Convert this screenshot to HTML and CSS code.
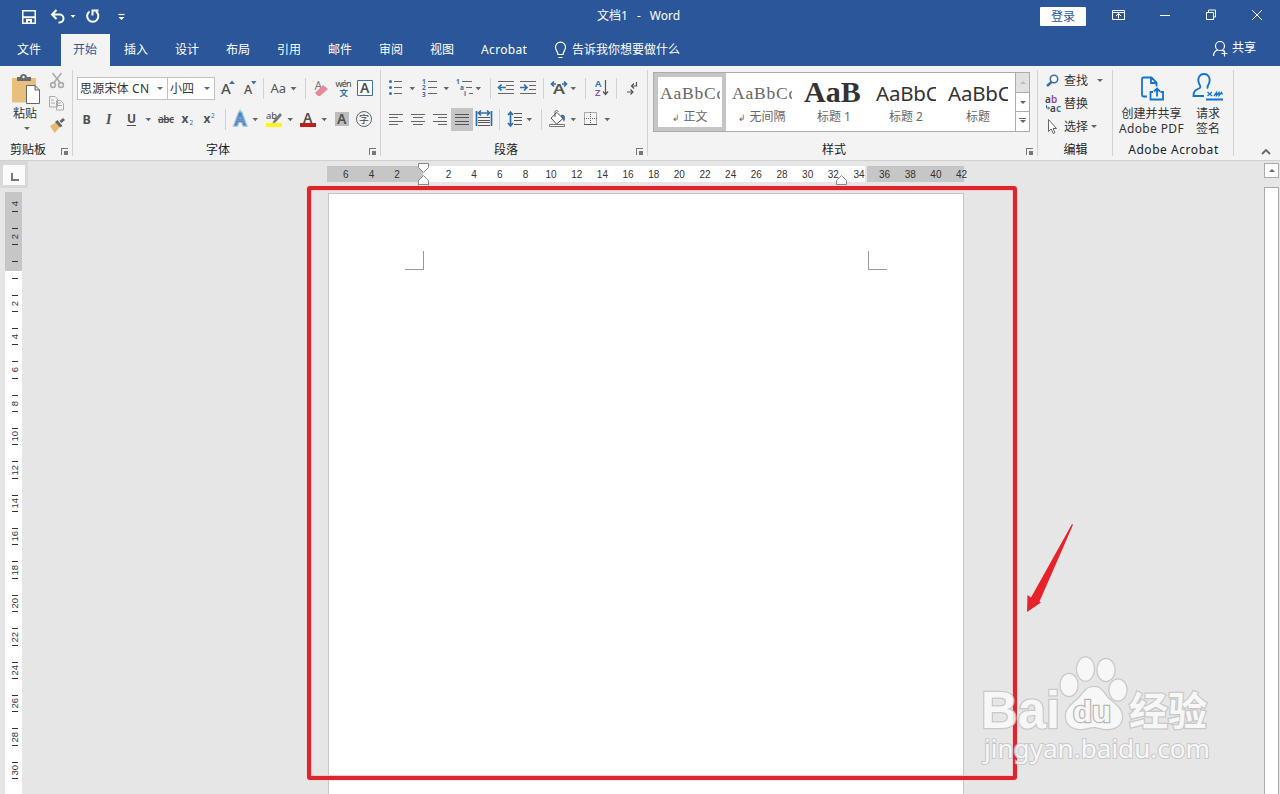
FILE: index.html
```html
<!DOCTYPE html>
<html lang="zh-CN">
<head>
<meta charset="utf-8">
<title>文档1 - Word</title>
<link rel="stylesheet" href="styles.css">
</head>
<body>
<div class="app">
<header class="head">
  <div class="titlebar">
    <svg class="quick" width="130" height="32" viewBox="0 0 130 32" fill="none" stroke="#fff">
      <path d="M22.750 10.750h12.500v12.500h-12.500z" stroke-width="1.500"/><path d="M23 17.200h12M27 23v-3h4v3" stroke-width="2"/>
      <path d="M56.500 10L52 14.500l4.500 4.500M52.500 14.500h7a4 4 0 0 1 0 8h-1" stroke-width="2"/>
      <path d="M70.500 15h5l-2.500 2.800z" fill="#fff" stroke="none"/>
      <path d="M89.500 11.500a5.600 5.600 0 1 0 6.500 0M92.500 15.500v-5h6" stroke-width="2"/>
      <path d="M118.500 14.500h6" stroke-width="1.200"/><path d="M118.500 17h6l-3 3z" fill="#fff" stroke="none"/>
    </svg>
    <div class="doc-title"><span>文档1</span><span>-</span><span>Word</span></div>
    <button class="login">登录</button>
    <svg class="winbtns" width="194" height="32" viewBox="1086 0 194 32" fill="none" stroke="#fff">
      <path d="M1112.500 10.500h12v9h-12zM1112.500 12.500h12M1118.500 18.500v-5M1116 16l2.500-2.500L1121 16"/>
      <path d="M1160 15.500h10M1206.500 12.500h7v7h-7zM1208.500 12v-2h7v7h-2M1252 10l10 10M1262 10l-10 10"/>
    </svg>
  </div>
  <nav class="tabs">
    <a class="tab file">文件</a><a class="tab active">开始</a><a class="tab">插入</a><a class="tab">设计</a><a class="tab">布局</a><a class="tab">引用</a><a class="tab">邮件</a><a class="tab">审阅</a><a class="tab">视图</a><a class="tab latin">Acrobat</a>
    <span class="tell"><svg width="14" height="18" viewBox="553 41 14 18" fill="none" stroke="#fff" stroke-width="1.200"><path d="M558 54.500c0-3-2.500-3.800-2.500-7.300a5 5 0 0 1 10 0c0 3.500-2.500 4.300-2.500 7.300zM558.500 57.500h4"/></svg>告诉我你想要做什么</span>
    <span class="share"><svg width="17" height="17" viewBox="1212 40 17 17" fill="none" stroke="#fff" stroke-width="1.200"><circle cx="1220" cy="46" r="4.500"/><path d="M1213.500 56c0-3.500 2-5.500 4.500-6.200M1222 50l2 1.500M1221.500 53.500h6M1224.500 50.500v6"/></svg>共享</span>
  </nav>
</header>

<section class="ribbon">
  <div class="group clip">
    <div class="tools">
      <div class="paste">
        <svg width="34" height="32" viewBox="10 73 34 32"><path d="M13 78h24v24.500H13z" fill="#e8c07c"/><path d="M18 81v-4h3c0-4 7-4 7 0h4v4z" fill="#6b6b6b"/><circle cx="24.500" cy="77" r="1.200" fill="#f3f3f3"/><path d="M27.500 85.500h8.500l4.500 4.500v13.500h-13zM36 85.500v4.500h4.500" fill="#fff" stroke="#666"/></svg>
        <span>粘贴</span>
        <i class="caret"></i>
      </div>
      <svg width="22" height="66" viewBox="47 70 22 66" fill="none">
        <g stroke="#aaa" stroke-width="1.600"><path d="M52.500 73l7.500 9.500M61.500 73L54 82.500"/><circle cx="53" cy="85" r="2.400"/><circle cx="61" cy="85" r="2.400"/></g>
        <path d="M49.500 96.500h5.500l2.500 2.500v8h-8zM56.500 100.500h4l3 3v6.500h-7zM58 103h3M58 105.500h4M51 100h3M51 103h4" stroke="#aaa"/>
        <path d="M50 126l6-3.500 3.500 5-5 5.500z" fill="#e8b96b"/><path d="M55 122l2.500-2 5 6-2.500 1.500zM59.500 121l3.500-3 2 2-3.500 3z" fill="#666"/>
      </svg>
    </div>
    <div class="label"><span>剪贴板</span><i class="launch"></i></div>
  </div>

  <div class="group font">
    <div class="tools">
      <div class="row">
        <div class="combo family"><span>思源宋体 CN</span><i class="caret"></i></div>
        <div class="combo size"><span>小四</span><i class="caret"></i></div>
        <svg width="160" height="26" viewBox="216 75 160 26">
          <g class="mid"><text x="221" y="94" font-size="15">A</text><text x="244" y="94" font-size="12.500">A</text></g>
          <path d="M229 84l3-3.500 3 3.500zM251 81h5.500l-2.700 3.500z" fill="#4472a8"/>
          <text x="270.500" y="92.500" font-size="13" fill="#555">Aa</text><path class="car" d="M290.500 87h6l-3 3.500z"/>
          <path class="sep" d="M263.500 78v21M305.500 78v21"/>
          <text x="314.500" y="90" font-size="12" fill="#777">A</text><path d="M315 93l8-8 5 4-8 7h-2z" fill="#e58a96"/>
          <text x="335.500" y="86.500" font-size="9" fill="#444" textLength="16">wén</text><text x="339.500" y="96" font-size="8.500" fill="#2f6fa8" font-weight="bold">文</text>
          <path d="M357.500 80.500h15v15h-15z" fill="#fff" stroke="#41719c"/><text class="bold6" x="360" y="93" font-size="14">A</text>
        </svg>
      </div>
      <div class="row">
        <svg width="299" height="26" viewBox="77 106 299 26">
          <g font-size="12.500" font-weight="bold" fill="#505050"><text x="82.500" y="123.500">B</text><text x="106" y="123.500" font-family="Liberation Serif" font-style="italic" font-size="14">I</text><text x="127" y="123" font-size="12">U</text>
          <text x="158" y="123" font-size="10" textLength="16" font-weight="600">abc</text><text x="181.500" y="123" font-size="12">x</text><text x="203.500" y="123" font-size="12">x</text></g>
          <path d="M127 125.500h9M158 119.500h16" stroke="#505050"/>
          <text x="189.500" y="125" font-size="6.500" fill="#2f6fa8">2</text><text x="211" y="118" font-size="6.500" fill="#2f6fa8">2</text>
          <path class="car" d="M145.500 118h5.500l-2.700 3.200zM252.500 118h5.500l-2.700 3.200zM287.500 118h5.500l-2.700 3.200zM321.500 118h5.500l-2.700 3.200z"/>
          <path class="sep" d="M225.500 109v21"/>
          <text x="235" y="125" font-size="16" fill="#fff" stroke="#9cc3e6" stroke-width="3.500">A</text><text x="235" y="125" font-size="16" fill="#fff" stroke="#3f7db8" stroke-width="1">A</text>
          <text x="266" y="118.500" font-size="9.500" fill="#444">ab</text><path d="M280 113l-6 7-2 4 4-2 6-7z" fill="#777"/><path d="M266 123h16v4h-16z" fill="#fcf51a"/>
          <text class="bold6" x="303" y="122.500" font-size="14">A</text><path d="M300 123h16v4h-16z" fill="#c61a1f"/>
          <path d="M335 112h14v14h-14z" fill="#bdbdbd"/><text class="bold6" x="337" y="124" font-size="14">A</text>
          <circle cx="364" cy="119" r="7.500" fill="none" stroke="#666"/><text x="359" y="122.800" font-size="10" fill="#444">字</text>
        </svg>
      </div>
    </div>
    <div class="label"><span>字体</span><i class="launch"></i></div>
  </div>

  <div class="group para">
    <div class="tools">
      <svg width="262" height="62" viewBox="383 72 262 62" fill="none">
        <g stroke="#666"><path d="M394 81.500h8M394 87.500h8M394 93.500h8M428 81.500h9M428 87.500h9M428 93.500h9M462 81.500h10M466 87.500h6M469 93.500h4"/>
        <path d="M498 81.500h16M506 85.500h8M506 89.500h8M498 93.500h16M520 81.500h16M529 85.500h7M529 89.500h7M520 93.500h16"/>
        <path d="M389 114.500h14M389 117.500h9M389 121.500h14M389 124.500h9M411 114.500h14M413 117.500h10M411 121.500h14M413 124.500h10M433 114.500h14M438 117.500h9M433 121.500h14M438 124.500h9"/></g>
        <path d="M451 108h22v23h-22z" fill="#c5c5c5"/><path d="M455 114.500h14M455 117.500h14M455 121.500h14M455 124.500h14M478 117.500h12M478 120.500h12M478 122.500h12M478 125.500h12M514 113.500h8M514 117.500h8M514 120.500h8M514 124.500h8" stroke="#555"/>
        <g fill="#3c6ea8"><circle cx="390.500" cy="81.500" r="1.500"/><circle cx="390.500" cy="87.500" r="1.500"/><circle cx="390.500" cy="93.500" r="1.500"/>
        <g font-size="6.500" font-weight="bold"><text x="422" y="84">1</text><text x="422" y="90">2</text><text x="422" y="96.500">3</text><text x="456" y="84">1</text><text x="460" y="90">a</text><text x="464" y="96">i</text></g></g>
        <g stroke="#2f6fa8" stroke-width="1.700"><path d="M506 87.500h-6M501.500 84.500l-3 3 3 3M520 87.500h6M524 84.500l3 3-3 3M476.500 111v15M491.500 111v15M479 113h10M481 110.500l-2.500 2.500 2.500 2.500M487 110.500l2.500 2.500-2.500 2.500M510.500 113v12M508 115l2.500-3 2.500 3M508 123l2.500 3 2.500-3"/>
        <path d="M556 84h-4M554 81.500l-2.500 2.500 2.500 2.500M562 84h4M564 81.500l2.500 2.500-2.500 2.500"/></g>
        <text x="553" y="94" font-size="14.500" font-weight="600" textLength="12" lengthAdjust="spacingAndGlyphs" fill="#555">A</text>
        <g font-size="9.500" font-weight="600"><text x="595" y="87" fill="#2f6fa8">A</text><text x="595" y="95.500" fill="#8d4b9f">Z</text></g>
        <path d="M605.500 80v14M603 91.500l2.500 3 2.500-3M636.500 82v4h-5M634 83.500l-2.500 2.500 2.500 2.500M627 92h6M630.500 89.500l2.500 2.500-2.500 2.500" stroke="#555" stroke-width="1.200"/>
        <path d="M551 118l6-5.500 6 6-6.500 5.500zM555 117v-5c0-2 3-2 3 0" stroke="#555" fill="#fff"/><path d="M561 115c4-1 5 3 3 7-1-2-1-4-3-5z" fill="#3c6ea8"/><path d="M549.500 124.500h15v2h-15z" fill="#fff" stroke="#777"/>
        <path d="M584.500 112.500h12v12h-12zM590.500 112v13M584 118.500h13" stroke="#666" stroke-dasharray="1 1"/><path d="M584 124.500h13" stroke="#555"/>
        <path class="car" d="M409.500 87h5.500l-2.700 3.200zM443.500 87h5.500l-2.700 3.200zM475.500 87h5.500l-2.700 3.200zM570.500 87h5.500l-2.700 3.200zM526.500 118h5.500l-2.700 3.200zM570.500 118h5.500l-2.700 3.200zM604.500 118h5.500l-2.700 3.200z"/>
        <path class="sep" d="M490.500 78v21M543.500 78v21M585.500 78v21M616.500 78v21M499.500 109v21M541.500 109v21"/>
      </svg>
    </div>
    <div class="label"><span>段落</span><i class="launch"></i></div>
  </div>

  <div class="group styles">
    <div class="tools">
      <div class="gallery">
        <div class="style on"><div class="sample thin">AaBbCc</div><div class="name"><small>↲</small> 正文</div></div>
        <div class="style"><div class="sample thin">AaBbCc</div><div class="name"><small>↲</small> 无间隔</div></div>
        <div class="style"><div class="sample heavy">AaB</div><div class="name">标题 1</div></div>
        <div class="style"><div class="sample sans">AaBbC</div><div class="name">标题 2</div></div>
        <div class="style"><div class="sample sans">AaBbC</div><div class="name">标题</div></div>
        <div class="spin"><span class="off"><i class="caret rise"></i></span><span><i class="caret"></i></span><span class="more"><i class="caret"></i></span></div>
      </div>
    </div>
    <div class="label"><span>样式</span><i class="launch"></i></div>
  </div>

  <div class="group edit">
    <div class="tools">
      <div class="cmd"><svg width="17" height="18" viewBox="0 0 17 18"><circle cx="10" cy="7" r="3.700" fill="#fff" stroke="#3c6ea8" stroke-width="1.600"/><path d="M7.500 10L3 14" stroke="#3c6ea8" stroke-width="2.400"/></svg><span>查找</span><i class="caret far"></i></div>
      <div class="cmd"><svg width="17" height="18" viewBox="0 0 17 18" font-size="10" font-weight="600"><text x="1" y="8" fill="#444">a</text><text x="7" y="8" fill="#8d4b9f">b</text><text x="6" y="16.500" fill="#444">a</text><text x="12" y="16.500" fill="#2f6fa8">c</text><path d="M2.500 10v3h3M4 11.500L5.500 13 4 14.500" fill="none" stroke="#2f6fa8"/></svg><span>替换</span></div>
      <div class="cmd"><svg width="17" height="18" viewBox="0 0 17 18"><path d="M4.500 1.500v12l2.700-2.500 2 4.500 1.800-.8-2-4.200h3.500z" fill="#fff" stroke="#666"/></svg><span>选择</span><i class="caret"></i></div>
    </div>
    <div class="label"><span>编辑</span></div>
  </div>

  <div class="group acro">
    <div class="tools">
      <div class="big wide"><svg width="28" height="30" viewBox="1139 74 28 30" fill="none" stroke="#1473d0" stroke-width="1.800"><path d="M1148 97.500h-3.500a1.500 1.500 0 0 1-1.500-1.500V80a1.500 1.500 0 0 1 1.500-1.500h8l5 5v4M1152 79v5h5M1154 93h-2.500v7.500h12.500V93h-2.500M1158 97.500v-7.500M1155 92.500l3-3 3 3"/></svg><span>创建并共享<br><em class="latin">Adobe PDF</em></span></div>
      <div class="big"><svg width="34" height="30" viewBox="1191 74 34 30" fill="none" stroke="#1473d0" stroke-width="1.800"><path d="M1204 97h-10.500c0-5 2-6 5.500-7.500 2.500-1 1-3 0-5-2-5 .5-9.500 5-9.500s7 4.500 5 9.500c-1 2-2.500 3.500-1 5M1206 100.500h17"/><path d="M1207.500 93l4.500 4M1212 93l-4.500 4M1214 97l2.500-3.500v3l2.500-3v3l2.500-3 1 2" stroke-width="1.300"/></svg><span>请求<br>签名</span></div>
    </div>
    <div class="label"><span class="latin">Adobe Acrobat</span></div>
  </div>
  <svg class="collapse" width="12" height="10" viewBox="0 0 12 10" fill="none" stroke="#666" stroke-width="1.800"><path d="M2 7l4-4 4 4"/></svg>
</section>

<main class="work">
  <aside class="left">
    <div class="tabstop"><i></i></div>
    <div class="vruler">
      <b class="first"><u>4</u></b><b><u>2</u></b><b><u></u></b><b><u>2</u></b><b><u>4</u></b><b><u>6</u></b><b><u>8</u></b><b><u>10</u></b><b><u>12</u></b><b><u>14</u></b><b><u>16</u></b><b><u>18</u></b><b><u>20</u></b><b><u>22</u></b><b><u>24</u></b><b><u>26</u></b><b><u>28</u></b><b><u>30</u></b>
    </div>
  </aside>
  <div class="center">
    <div class="hruler">
      <span>6</span><span>4</span><span>2</span><span></span><span>2</span><span>4</span><span>6</span><span>8</span><span>10</span><span>12</span><span>14</span><span>16</span><span>18</span><span>20</span><span>22</span><span>24</span><span>26</span><span>28</span><span>30</span><span>32</span><span>34</span><span>36</span><span>38</span><span>40</span><span>42</span>
      <svg class="indent" width="12" height="28" viewBox="0 0 12 28" fill="#fff" stroke="#888"><path d="M.5.500h10v4l-5 5-5-5zM5.500 12.500l5 5v4H.5v-4zM.5 21.500h10v5H.5z"/></svg>
      <svg class="indent right" width="12" height="11" viewBox="0 0 12 11" fill="#fff" stroke="#888"><path d="M5.500.500l5 5v4H.5v-4z"/></svg>
    </div>
    <div class="page"><i class="mark"></i><i class="mark r"></i></div>
  </div>
  <div class="scroll"><div class="up"><i class="caret rise"></i></div><div class="thumb"></div></div>
</main>
<div class="frame"></div>
<svg class="notes" width="320" height="294" viewBox="960 500 320 294">
  <path d="M1072 524q1.500 0 .5 2l-33 75.500 1.500 1-14 9.500.500-17 3.500 2.500z" fill="#e8212b"/>
  <g class="wm" fill="#fafafa" stroke="#c4c4c4" stroke-width="2.500" paint-order="stroke" opacity=".85">
    <text x="981" y="728" font-family="Liberation Sans" font-size="51" font-weight="bold" textLength="79" lengthAdjust="spacingAndGlyphs">Bai</text>
    <ellipse cx="1069" cy="685" rx="8.500" ry="11"/><ellipse cx="1085.500" cy="669" rx="8.500" ry="11.500"/><ellipse cx="1106" cy="670" rx="8.500" ry="11"/><ellipse cx="1118" cy="690" rx="8.500" ry="10.500"/>
    <path d="M1094 687c7 0 9 5 13 10 5 6 15 10 15 20 0 9-8 12-15 12-6 0-9-2-13-2s-8 2-14 2c-7 0-14-4-14-13 0-9 9-13 14-19 4-5 7-10 14-10z"/>
    <text x="1073" y="722" font-family="Liberation Sans" font-size="30" font-weight="bold" stroke="#b0b0b0" textLength="38" lengthAdjust="spacingAndGlyphs">du</text>
    <text x="1129" y="725" font-size="39" font-weight="bold">经验</text>
    <text x="984" y="758" font-size="25" stroke-width="2" textLength="226" lengthAdjust="spacingAndGlyphs">jingyan.baidu.com</text>
  </g>
</svg>
</div>
</body>
</html>
```

FILE: styles.css
```css
* { box-sizing: border-box; }
body { margin: 0; font: 12px/16px "Noto Sans", "Noto Sans CJK SC", sans-serif; color: #333; }
.app { position: relative; width: 1280px; height: 794px; overflow: hidden; display: flex; flex-direction: column; background: #e6e6e6; }
svg { display: block; flex: none; font-family: "Noto Sans", "Noto Sans CJK SC", sans-serif; }
em { font-style: normal; }
.latin { letter-spacing: .35px; }
.label .latin { letter-spacing: .55px; }
.head { height: 66px; background: #2b579a; color: #fff; flex: none; }
.titlebar { height: 32px; display: flex; align-items: center; }
.doc-title { display: flex; gap: 9px; margin-left: 467px; width: 443px; padding-bottom: 1px; }
.login { width: 46px; height: 19px; border: 0; border-radius: 1px; background: #fff; color: #2b579a; font: inherit; line-height: 17px; padding: 0; }
.winbtns, .share { margin-left: auto; }
.tabs { display: flex; height: 34px; gap: 2px; padding: 2px 24px 0 5px; }
.tab { padding: 0 12px; line-height: 31px; height: 32px; width: 49px; white-space: nowrap; }
.tab.file { margin-right: 5px; }
.tab.active { background: #f3f3f3; color: #2b579a; }
.tell, .share { display: flex; align-items: center; gap: 5px; height: 32px; }
.tell { margin-left: 33px; }
.share { gap: 3px; height: 28px; }

.ribbon { height: 95px; flex: none; display: flex; background: #f3f3f3; border-bottom: 1px solid #d0d0d0; }
.group { position: relative; display: flex; flex-direction: column; flex: none; }
.group::after { content: ""; position: absolute; right: 0; top: 4px; height: 86px; width: 1px; background: #d2d2d2; }
.tools { height: 74px; display: flex; }
.label { height: 20px; display: flex; align-items: center; justify-content: center; color: #222; }
.launch { position: absolute; right: 5px; bottom: 5px; width: 7px; height: 7px; border: solid #777; border-width: 1px 0 0 1px; background: linear-gradient(#777, #777) right bottom / 4px 4px no-repeat; }
.caret { display: inline-block; width: 0; height: 0; border: 3px solid transparent; border-top: 3.5px solid #666; border-bottom: 0; flex: none; }
.caret.rise { border: 3px solid transparent; border-bottom: 3.5px solid #666; border-top: 0; }
.car { fill: #666; }
.sep { stroke: #d2d2d2; }
.bold6 { font-weight: 600; fill: #505050; }
.mid { font-weight: 500; fill: #505050; }

.clip { width: 73px; }
.clip .tools { padding: 4px 0 0; }
.clip .label { padding-right: 17px; }
.paste { width: 47px; display: flex; flex-direction: column; align-items: center; padding-top: 3px; }
.paste svg { margin-left: 5px; }
.paste span { padding: 1px 0 0 3px; }
.paste .caret { margin: 5px 0 0 6px; }
.font { width: 308px; }
.font .tools { flex-direction: column; padding: 9px 0 0 4px; gap: 5px; }
.font .label { padding-right: 18px; }
.row { display: flex; height: 26px; align-items: flex-start; }
.combo { height: 23px; margin-top: 2px; background: #fff; border: 1px solid #c2c2c2; display: flex; align-items: center; justify-content: space-between; padding: 0 4px 0 2px; white-space: nowrap; }
.family { width: 91px; letter-spacing: .2px; }
.size { width: 48px; margin-left: -1px; }
.row .size + svg { margin-left: 1px; }
.para { width: 267px; }
.para .tools { padding: 6px 0 0 2px; }
.para .label { padding-right: 17px; }
.styles { width: 390px; }
.styles .tools { padding: 6px 0 0 5px; }
.styles .label { padding-right: 18px; }
.gallery { width: 377px; height: 60px; border: 1px solid #ababab; background: #fff; display: flex; }
.style { width: 72px; height: 58px; display: flex; flex-direction: column; align-items: center; white-space: nowrap; color: #666; }
.style.on { box-shadow: inset 0 0 0 4px #c5c5c5; }
.sample { width: 60px; height: 34px; overflow: hidden; color: #333; }
.thin { font: 17.5px/41px "Liberation Serif", serif; color: #666; letter-spacing: .8px; }
.heavy { font: bold 30px/37px "Liberation Serif", serif; }
.sans { font-size: 20.5px; line-height: 40px; letter-spacing: -.2px; }
.name { line-height: 20px; }
.name small { font-size: 9px; }
.spin { width: 14px; margin-left: auto; border-left: 1px solid #ababab; display: flex; flex-direction: column; }
.spin span { flex: 1; display: flex; align-items: center; justify-content: center; border-bottom: 1px solid #ababab; }
.spin span:last-child { border: 0; }
.spin .off { background: #e1e1e1; }
.off .caret.rise { border-bottom-color: #bbb; }
.spin .more::before { content: ""; position: absolute; width: 7px; height: 1px; margin-bottom: 7px; background: #666; }
.edit { width: 75px; }
.edit .tools { flex-direction: column; padding: 3px 0 0 6px; }
.cmd { display: flex; align-items: center; height: 23px; gap: 3px; }
.cmd .far { margin-left: 6px; }
.acro { width: 121px; }
.acro .tools { padding: 7px 0 0 5px; }
.big { width: 44px; display: flex; flex-direction: column; align-items: center; text-align: center; line-height: 15px; white-space: nowrap; margin-left: 1px; }
.big.wide { width: 67px; margin: 0; }
.big span { margin-top: 3px; }
.collapse { align-self: flex-end; margin: 0 0 3px 26px; }

.work { flex: 1; display: flex; min-height: 0; }
.left { width: 28px; flex: none; }
.tabstop { width: 28px; height: 27px; background: #fbfbfb; border: 3px solid #d8d8d8; border-top-width: 4px; display: flex; align-items: center; justify-content: center; }
.tabstop i { width: 8px; height: 8px; border: solid #777; border-width: 0 0 2px 2px; margin: 3px 0 0 2px; }
.vruler { width: 17px; height: 602px; margin: 4px 0 0 5px; overflow: hidden; background: linear-gradient(#c6c6c6 79px, #fff 79px); display: flex; flex-direction: column; align-items: center; }
.vruler b { height: 33.36px; flex: none; width: 17px; font: 9.5px/10px "Liberation Sans", sans-serif; color: #333; display: flex; flex-direction: column; align-items: center; justify-content: space-between; padding: 8px 0 8px 2px; }
.vruler b::before, .vruler b::after { content: ""; width: 6px; height: 1px; background: #333; flex: none; }
.vruler .first { margin-top: -5.5px; }
.vruler .first::before { visibility: hidden; }
.vruler u { text-decoration: none; writing-mode: vertical-rl; transform: rotate(180deg); }
.center { width: 638px; margin-left: 300px; flex: none; display: flex; flex-direction: column; }
.hruler { position: relative; height: 16px; margin: 5px 0 0 -1px; width: 637px; padding-left: 6px; display: flex; background: linear-gradient(90deg, #c6c6c6 96px, #fff 96px, #fff 538px, #e6e6e6 538px, #e6e6e6 540px, #c6c6c6 540px); }
.hruler span { width: 25.67px; flex: none; text-align: center; font: 10px/17px "Liberation Sans", sans-serif; color: #333; }
.indent { position: absolute; left: 91px; top: -3px; }
.indent.right { left: 509px; top: 9px; }
.page { flex: 1; width: 636px; margin-top: 11px; background: #fff; border: 1px solid #c6c6c6; border-bottom: 0; padding: 57px 76px; display: flex; justify-content: space-between; }
.mark { width: 19px; height: 19px; border: solid #999; border-width: 0 1px 1px 0; }
.mark.r { border-width: 0 0 1px 1px; }
.scroll { width: 16px; margin-left: auto; display: flex; flex-direction: column; padding-top: 2px; }
.up { width: 15px; height: 15px; border: 1px solid #ababab; background: #fff; display: flex; align-items: center; justify-content: center; }
.thumb { width: 15px; flex: 1; margin-top: 9px; background: #fff; border: 1px solid #ababab; border-bottom: 0; }
.frame { position: absolute; left: 307px; top: 186px; width: 710px; height: 594px; border: 4px solid #dc252d; border-radius: 3px; box-shadow: 0 0 0 1px #f8c9cb80, inset 0 0 0 1px #f8c9cb; }
.notes { position: absolute; right: 0; bottom: 0; }
```
